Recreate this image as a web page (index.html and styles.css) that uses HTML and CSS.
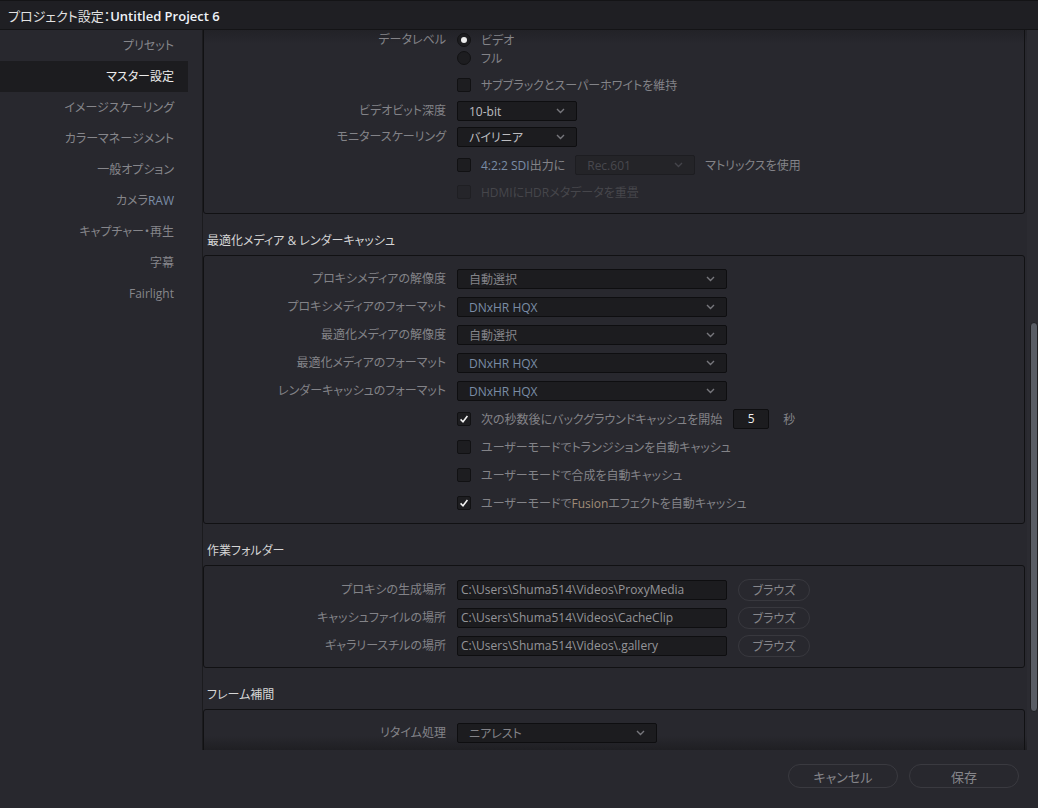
FILE: index.html
```html
<!DOCTYPE html>
<html lang="ja">

<head>
    <meta charset="utf-8">
    <meta name="viewport" content="width=device-width, initial-scale=1.0">
    <link rel="stylesheet" href="styles.css">
</head>

<body>
    <div class="window">
        <header class="titlebar">
            <span class="title">プロジェクト設定：<b>Untitled Project 6</b></span>
        </header>

        <div class="main">
            <nav class="sidebar">
                <div class="nav-item">プリセット</div>
                <div class="nav-item active">マスター設定</div>
                <div class="nav-item">イメージスケーリング</div>
                <div class="nav-item">カラーマネージメント</div>
                <div class="nav-item">一般オプション</div>
                <div class="nav-item">カメラ<span class="en">RAW</span></div>
                <div class="nav-item">キャプチャー・再生</div>
                <div class="nav-item">字幕</div>
                <div class="nav-item en">Fairlight</div>
            </nav>

            <div class="content">
                <div class="scroll">
                    <!-- top panel, scrolled partly out of view -->
                    <div class="panel first">
                        <div class="row radio-row">
                            <label class="label">データレベル</label>
                            <div class="radios">
                                <div class="radio-line"><span class="radio on"></span><span>ビデオ</span></div>
                                <div class="radio-line"><span class="radio"></span><span>フル</span></div>
                            </div>
                        </div>
                        <div class="row">
                            <span></span>
                            <div class="check-line"><span class="checkbox"></span><span>サブブラックとスーパーホワイトを維持</span></div>
                        </div>
                        <div class="row short">
                            <label class="label">ビデオビット深度</label>
                            <div class="select small"><span class="value bright">10-bit</span><svg class="chevron" width="9" height="6" viewBox="0 0 9 6"><polyline points="1,1 4.5,4.5 8,1" /></svg></div>
                        </div>
                        <div class="row">
                            <label class="label">モニタースケーリング</label>
                            <div class="select small"><span class="value bright">バイリニア</span><svg class="chevron" width="9" height="6" viewBox="0 0 9 6"><polyline points="1,1 4.5,4.5 8,1" /></svg></div>
                        </div>
                        <div class="row">
                            <span></span>
                            <div class="check-line">
                                <span class="checkbox"></span>
                                <span><span class="en">4:2:2 SDI</span>出力に</span>
                                <div class="select rec disabled"><span class="value">Rec.601</span><svg class="chevron" width="9" height="6" viewBox="0 0 9 6"><polyline points="1,1 4.5,4.5 8,1" /></svg></div>
                                <span>マトリックスを使用</span>
                            </div>
                        </div>
                        <div class="row mid">
                            <span></span>
                            <div class="check-line disabled"><span class="checkbox"></span><span>HDMIにHDRメタデータを重畳</span></div>
                        </div>
                    </div>

                    <h3 class="heading">最適化メディア &amp; レンダーキャッシュ</h3>
                    <div class="panel cache">
                        <div class="row">
                            <label class="label">プロキシメディアの解像度</label>
                            <div class="select wide"><span class="value">自動選択</span><svg class="chevron" width="9" height="6" viewBox="0 0 9 6"><polyline points="1,1 4.5,4.5 8,1" /></svg></div>
                        </div>
                        <div class="row">
                            <label class="label">プロキシメディアのフォーマット</label>
                            <div class="select wide"><span class="value en">DNxHR HQX</span><svg class="chevron" width="9" height="6" viewBox="0 0 9 6"><polyline points="1,1 4.5,4.5 8,1" /></svg></div>
                        </div>
                        <div class="row">
                            <label class="label">最適化メディアの解像度</label>
                            <div class="select wide"><span class="value">自動選択</span><svg class="chevron" width="9" height="6" viewBox="0 0 9 6"><polyline points="1,1 4.5,4.5 8,1" /></svg></div>
                        </div>
                        <div class="row">
                            <label class="label">最適化メディアのフォーマット</label>
                            <div class="select wide"><span class="value en">DNxHR HQX</span><svg class="chevron" width="9" height="6" viewBox="0 0 9 6"><polyline points="1,1 4.5,4.5 8,1" /></svg></div>
                        </div>
                        <div class="row">
                            <label class="label">レンダーキャッシュのフォーマット</label>
                            <div class="select wide"><span class="value en">DNxHR HQX</span><svg class="chevron" width="9" height="6" viewBox="0 0 9 6"><polyline points="1,1 4.5,4.5 8,1" /></svg></div>
                        </div>
                        <div class="row">
                            <span></span>
                            <div class="check-line">
                                <span class="checkbox checked"><svg width="14" height="14" viewBox="0 0 14 14"><polyline points="3,7.5 5.8,10.2 11,3.5" /></svg></span>
                                <span>次の秒数後にバックグラウンドキャッシュを開始</span>
                                <span class="number">5</span>
                                <span class="unit">秒</span>
                            </div>
                        </div>
                        <div class="row">
                            <span></span>
                            <div class="check-line"><span class="checkbox"></span><span>ユーザーモードでトランジションを自動キャッシュ</span></div>
                        </div>
                        <div class="row">
                            <span></span>
                            <div class="check-line"><span class="checkbox"></span><span>ユーザーモードで合成を自動キャッシュ</span></div>
                        </div>
                        <div class="row">
                            <span></span>
                            <div class="check-line"><span class="checkbox checked"><svg width="14" height="14" viewBox="0 0 14 14"><polyline points="3,7.5 5.8,10.2 11,3.5" /></svg></span><span>ユーザーモードで<span class="warm">Fusion</span>エフェクトを自動キャッシュ</span></div>
                        </div>
                    </div>

                    <h3 class="heading">作業フォルダー</h3>
                    <div class="panel folders">
                        <div class="row">
                            <label class="label">プロキシの生成場所</label>
                            <div class="path-line"><span class="path">C:\Users\Shuma514\Videos\ProxyMedia</span><button class="browse">ブラウズ</button></div>
                        </div>
                        <div class="row">
                            <label class="label">キャッシュファイルの場所</label>
                            <div class="path-line"><span class="path">C:\Users\Shuma514\Videos\CacheClip</span><button class="browse">ブラウズ</button></div>
                        </div>
                        <div class="row">
                            <label class="label">ギャラリースチルの場所</label>
                            <div class="path-line"><span class="path">C:\Users\Shuma514\Videos\.gallery</span><button class="browse">ブラウズ</button></div>
                        </div>
                    </div>

                    <h3 class="heading">フレーム補間</h3>
                    <div class="panel retime-panel">
                        <div class="row">
                            <label class="label">リタイム処理</label>
                            <div class="select retime"><span class="value">ニアレスト</span><svg class="chevron" width="9" height="6" viewBox="0 0 9 6"><polyline points="1,1 4.5,4.5 8,1" /></svg></div>
                        </div>
                    </div>
                </div>

                <div class="scrollbar">
                    <div class="thumb"></div>
                </div>
            </div>
        </div>

        <footer class="footer">
            <button class="pill">キャンセル</button>
            <button class="pill">保存</button>
        </footer>
    </div>
</body>

</html>
```

FILE: styles.css
```css
body {
    margin: 0;
    background: #28282e;
    font-family: "Open Sans", "Noto Sans CJK JP", sans-serif;
    font-size: 12px;
    color: #838388;
    font-feature-settings: "palt";
}

.window {
    width: 1038px;
    height: 808px;
    display: flex;
    flex-direction: column;
    overflow: hidden;
}

.en {
    color: #7a8da6;
}

.warm {
    color: #a08c78;
}

/* title bar */
.titlebar {
    height: 30px;
    flex: none;
    display: flex;
    align-items: center;
    padding-left: 8px;
    box-sizing: border-box;
    background: #1f1f23;
    border-top: 1px solid #141416;
    border-bottom: 1px solid #141416;
}

.title {
    color: #e2e2e2;
    font-size: 13px;
}

.title b {
    font-weight: 600;
    color: #eef2f8;
}

/* body */
.main {
    height: 720px;
    flex: none;
    display: flex;
}

.sidebar {
    width: 202px;
    flex: none;
    border-right: 1px solid #1b1b1e;
}

.nav-item {
    width: 188px;
    height: 31px;
    line-height: 31px;
    box-sizing: border-box;
    padding-right: 14px;
    text-align: right;
    color: #86868b;
}

.nav-item.active {
    background: #1c1c1f;
    color: #ececec;
}

.content {
    flex: 1;
    display: flex;
    min-width: 0;
    background: linear-gradient(#222227, #28282e 14px, #28282e 706px, #1f1f23);
}

.scroll {
    flex: 1;
    overflow: hidden;
    padding-right: 2px;
}

.scrollbar {
    width: 11px;
    flex: none;
    background: #2b2b31;
}

.thumb {
    width: 6px;
    height: 388px;
    margin: 292px 0 0 3px;
    background: #595d65;
    border: 1px solid #1f1f22;
    border-radius: 4px;
}

/* panels */
.panel {
    border: 1px solid #111113;
    border-radius: 3px;
    padding: 8px 0 7px;
}

.panel.first {
    margin-top: -10px;
    padding: 10px 0 8px;
}

.panel.cache {
    padding: 9px 0 6px;
}

.panel.folders {
    padding: 10px 0 7px;
}

.panel.retime-panel {
    padding-top: 9px;
}

.heading {
    margin: 0;
    padding: 19px 0 6px 4px;
    font-size: 12px;
    font-weight: normal;
    line-height: 16px;
    color: #d6d6d6;
}

.row {
    display: grid;
    grid-template-columns: 242px 1fr;
    column-gap: 11px;
    align-items: center;
    height: 28px;
}

.row.short {
    height: 24px;
}

.row.mid {
    height: 26px;
}

.radio-row {
    height: 40px;
    align-items: start;
}

.label {
    text-align: right;
    line-height: 18px;
}

.radios {
    display: flex;
    flex-direction: column;
}

.radio-line,
.check-line {
    display: flex;
    align-items: center;
    gap: 10px;
    height: 18px;
    white-space: nowrap;
}

.radio {
    width: 14px;
    height: 14px;
    box-sizing: border-box;
    border: 1px solid #121214;
    border-radius: 50%;
    background: #1d1d20;
    display: flex;
    align-items: center;
    justify-content: center;
}

.radio.on::after {
    content: "";
    width: 6px;
    height: 6px;
    border-radius: 50%;
    background: #ececec;
}

.checkbox {
    width: 14px;
    height: 14px;
    flex: none;
    box-sizing: border-box;
    border: 1px solid #111113;
    border-radius: 2px;
    background: #1d1d20;
    display: flex;
    align-items: center;
    justify-content: center;
}

.checkbox svg {
    display: block;
}

.checkbox polyline {
    fill: none;
    stroke: #f2f2f2;
    stroke-width: 1.8;
}

.check-line.disabled {
    color: #46464b;
}

.check-line.disabled .checkbox {
    background: #25252a;
    border-color: #1f1f23;
}

/* dropdowns */
.select {
    height: 20px;
    box-sizing: border-box;
    display: flex;
    align-items: center;
    justify-content: space-between;
    padding: 0 11px;
    background: #1c1c1f;
    border: 1px solid #0e0e10;
    border-radius: 2px;
}

.select.small {
    width: 120px;
}

.select.wide {
    width: 270px;
}

.select.retime {
    width: 200px;
}

.select.rec {
    width: 120px;
    background: #242428;
    border-color: #1d1d21;
    color: #48484e;
}

.value.bright {
    color: #bdbdc0;
}

.chevron polyline {
    fill: none;
    stroke: #77777c;
    stroke-width: 1.4;
}

.select.rec .chevron polyline {
    stroke: #44444a;
}

.number {
    width: 36px;
    height: 20px;
    box-sizing: border-box;
    margin-left: 1px;
    background: #1c1c1f;
    border: 1px solid #0e0e10;
    border-radius: 2px;
    color: #f0f0f0;
    text-align: center;
    line-height: 18px;
}

.unit {
    margin-left: 4px;
}

/* folders */
.path-line {
    display: flex;
    align-items: center;
    gap: 11px;
}

.path {
    width: 270px;
    height: 20px;
    box-sizing: border-box;
    padding-left: 3px;
    background: #1c1c1f;
    border: 1px solid #0e0e10;
    border-radius: 2px;
    line-height: 18px;
    color: #959599;
    white-space: nowrap;
    overflow: hidden;
}

.browse {
    width: 72px;
    height: 22px;
    padding: 0;
    background: transparent;
    border: 1px solid #38383e;
    border-radius: 11px;
    font: inherit;
    color: #86868b;
}

/* footer */
.footer {
    height: 58px;
    flex: none;
    display: flex;
    justify-content: flex-end;
    align-items: flex-start;
    gap: 11px;
    padding: 14px 19px 0 0;
    box-sizing: border-box;
}

.pill {
    width: 110px;
    height: 24px;
    padding: 0;
    background: transparent;
    border: 1px solid #3a3a40;
    border-radius: 12px;
    font: inherit;
    font-size: 13px;
    color: #86868b;
}
```
